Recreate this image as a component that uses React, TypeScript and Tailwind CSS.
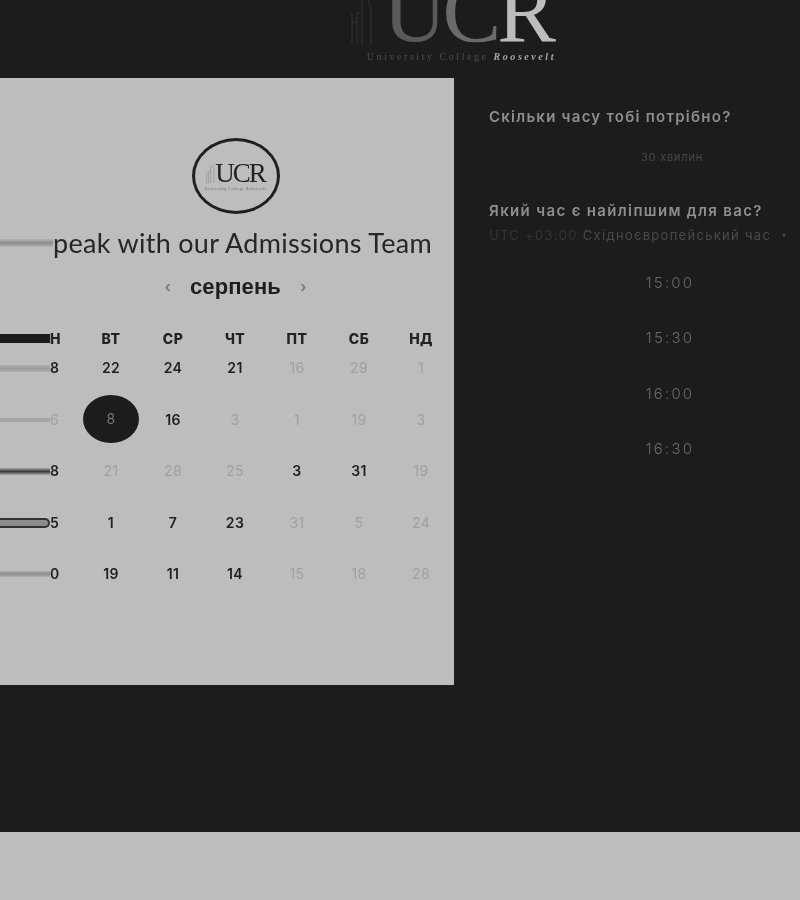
const weekDays = ["ВТ", "СР", "ЧТ", "ПТ", "СБ", "НД"];

type Day = { n: number; on?: boolean; picked?: boolean };

const weeks: { first: string; bar: string; firstOn?: boolean; days: Day[] }[] = [
  {
    first: "8",
    firstOn: true,
    bar: "h-[7px] bg-[linear-gradient(#b0b0b0,#9c9c9c,#b0b0b0)]",
    days: [{ n: 22, on: true }, { n: 24, on: true }, { n: 21, on: true }, { n: 16 }, { n: 29 }, { n: 1 }],
  },
  {
    first: "6",
    bar: "h-[4px] bg-[#a3a3a3]",
    days: [{ n: 8, picked: true }, { n: 16, on: true }, { n: 3 }, { n: 1 }, { n: 19 }, { n: 3 }],
  },
  {
    first: "8",
    firstOn: true,
    bar: "h-[7px] bg-[linear-gradient(#a9a9a9,#3a3a3a,#a9a9a9)]",
    days: [{ n: 21 }, { n: 28 }, { n: 25 }, { n: 3, on: true }, { n: 31, on: true }, { n: 19 }],
  },
  {
    first: "5",
    firstOn: true,
    bar: "h-[10px] rounded-r-full border-y-2 border-r-2 border-[#333] bg-[#8c8c8c]",
    days: [{ n: 1, on: true }, { n: 7, on: true }, { n: 23, on: true }, { n: 31 }, { n: 5 }, { n: 24 }],
  },
  {
    first: "0",
    firstOn: true,
    bar: "h-[6px] bg-[linear-gradient(#b0b0b0,#8f8f8f,#b0b0b0)]",
    days: [{ n: 19, on: true }, { n: 11, on: true }, { n: 14, on: true }, { n: 15 }, { n: 18 }, { n: 28 }],
  },
];

const times = ["15:00", "15:30", "16:00", "16:30"];

const Building = ({ className }: { className: string }) => (
  <svg viewBox="0 0 24 48" className={className} fill="none" stroke="currentColor" strokeWidth="1">
    <path d="M2 17v31M7 17v31M12 6v42M12 6l5-6 4 12v36M7 17h5M2 26h5" />
  </svg>
);

const SmallLogo = () => (
  <div className="flex h-[76px] w-[88px] flex-col items-center justify-center rounded-[50%] border-[3px] border-[#1f1f1f]">
    <div className="flex items-end font-['Liberation_Serif',serif] text-[27px] leading-[22px] tracking-[-2px] text-[#222]">
      <Building className="mb-[1px] h-[18px] w-[9px] text-[#777]" />
      UCR
    </div>
    <div className="mt-[2px] font-['Liberation_Serif',serif] text-[4px] leading-[5px] tracking-[0.5px] text-[#666]">
      University College Roosevelt
    </div>
  </div>
);

const DayCell = ({ day }: { day: Day }) => {
  if (day.picked) {
    return (
      <div className="flex h-[48px] w-[56px] items-center justify-center rounded-[50%] bg-[#1c1c1d] text-[14px] text-[#777]">
        {day.n}
      </div>
    );
  }
  return <span className={day.on ? "font-semibold text-[#1f1f1f]" : "text-[#a0a0a0]"}>{day.n}</span>;
};

export default function App() {
  return (
    <main className="flex min-h-[900px] flex-col overflow-hidden bg-[#1c1c1d] font-['Inter',sans-serif]">
      <header className="flex h-[78px] justify-center overflow-hidden pl-[106px] blur-[0.4px]">
        <div className="flex flex-col items-end">
          <div className="-mt-[24px] mr-[4px] flex items-end font-['Liberation_Serif',serif] text-[88px] leading-[72px] tracking-[-4px]">
            <Building className="mb-[4px] mr-[9px] h-[48px] w-[24px] text-[#333]" />
            <span className="text-[#5a5a5a]">U</span>
            <span className="text-[#6a6a6a]">C</span>
            <span className="text-[#bdbdbd]">R</span>
          </div>
          <div className="mt-[3px] font-['Liberation_Serif',serif] text-[10px] leading-[12px] tracking-[2.55px] text-[#4d4d4d]">
            University College <span className="font-bold italic text-[#a8a8a8]">Roosevelt</span>
          </div>
        </div>
      </header>

      <section className="flex h-[607px]">
        <div className="flex w-[454px] shrink-0 flex-col bg-[#bdbdbd] pt-[60px] blur-[0.4px]">
          <div className="flex justify-center pl-[17px]">
            <SmallLogo />
          </div>
          <div className="mt-[13px] flex items-center">
            <div className="h-[8px] w-[53px] bg-[linear-gradient(#b4b4b4,#8a8a8a,#b4b4b4)]" />
            <h1 className="font-['Lato',sans-serif] text-[27px] leading-[32px] tracking-[0.3px] text-[#262626]">
              peak with our Admissions Team
            </h1>
          </div>
          <div className="mt-[14px] flex items-center justify-center gap-[19px] pl-[17px]">
            <span className="text-[15px] font-bold leading-[28px] text-[#7a7a7a]">‹</span>
            <span className="font-['Liberation_Sans',sans-serif] text-[22px] font-bold leading-[28px] tracking-[0.1px] text-[#1f1f1f]">
              серпень
            </span>
            <span className="text-[15px] font-bold leading-[28px] text-[#7a7a7a]">›</span>
          </div>

          <div className="mt-[28px] grid grid-cols-[80px_repeat(6,62px)] text-[14px] tracking-[0.4px]">
            <div className="flex h-[29px] items-start">
              <div className="mt-[5px] h-[9px] w-[50px] bg-[#1c1c1d]" />
              <span className="text-[14px] leading-[20px] font-extrabold text-[#222]">Н</span>
            </div>
            {weekDays.map((d) => (
              <div key={d} className="flex h-[29px] justify-center text-[14px] leading-[20px] font-extrabold text-[#222]">
                {d}
              </div>
            ))}
            {weeks.map((week) => [
              <div key={week.days[0].n + week.first} className="flex h-[51.5px] items-start">
                <div className="flex h-[20px] w-[50px] items-center">
                  <div className={"w-full " + week.bar} />
                </div>
                <span className={"leading-[20px] " + (week.firstOn ? "font-semibold text-[#1f1f1f]" : "text-[#a0a0a0]")}>
                  {week.first}
                </span>
              </div>,
              ...week.days.map((day, i) => (
                <div key={week.first + i + day.n} className="relative flex h-[51.5px] justify-center leading-[20px]">
                  {day.picked ? (
                    <div className="absolute -top-[15px]">
                      <DayCell day={day} />
                    </div>
                  ) : (
                    <DayCell day={day} />
                  )}
                </div>
              )),
            ])}
          </div>
        </div>

        <div className="ml-[35px] flex-1 pt-[29px] blur-[0.4px]">
          <h2 className="text-[15px] font-semibold leading-[20px] tracking-[1.25px] text-[#8e8e8e]">
            Скільки часу тобі потрібно?
          </h2>
          <div className="mt-[20px] flex h-[38px] pl-[152px] text-[11px] leading-[20px] tracking-[0.8px] text-[#484848]">30 хвилин</div>
          <h2 className="mt-[16px] text-[15px] font-semibold leading-[20px] tracking-[1.35px] text-[#8e8e8e]">
            Який час є найліпшим для вас?
          </h2>
          <div className="mt-[5px] flex items-center text-[13px] leading-[18px] tracking-[1.3px] text-[#4a4a4a]">
            <span className="text-[#353535]">UTC +03:00</span>
            <span className="ml-[5px]">Східноєвропейський час</span>
            <span className="ml-[11px] text-[8px]">▾</span>
          </div>
          <div className="mt-[29px] flex flex-col items-center pl-[51px]">
            {times.map((t) => (
              <div key={t} className="h-[55.4px] text-[15px] font-light leading-[20px] tracking-[2.2px] text-[#6a6a6a]">
                {t}
              </div>
            ))}
          </div>
        </div>
      </section>

      <div className="h-[147px]" />
      <footer className="h-[68px] bg-[#bdbdbd]" />
    </main>
  );
}
